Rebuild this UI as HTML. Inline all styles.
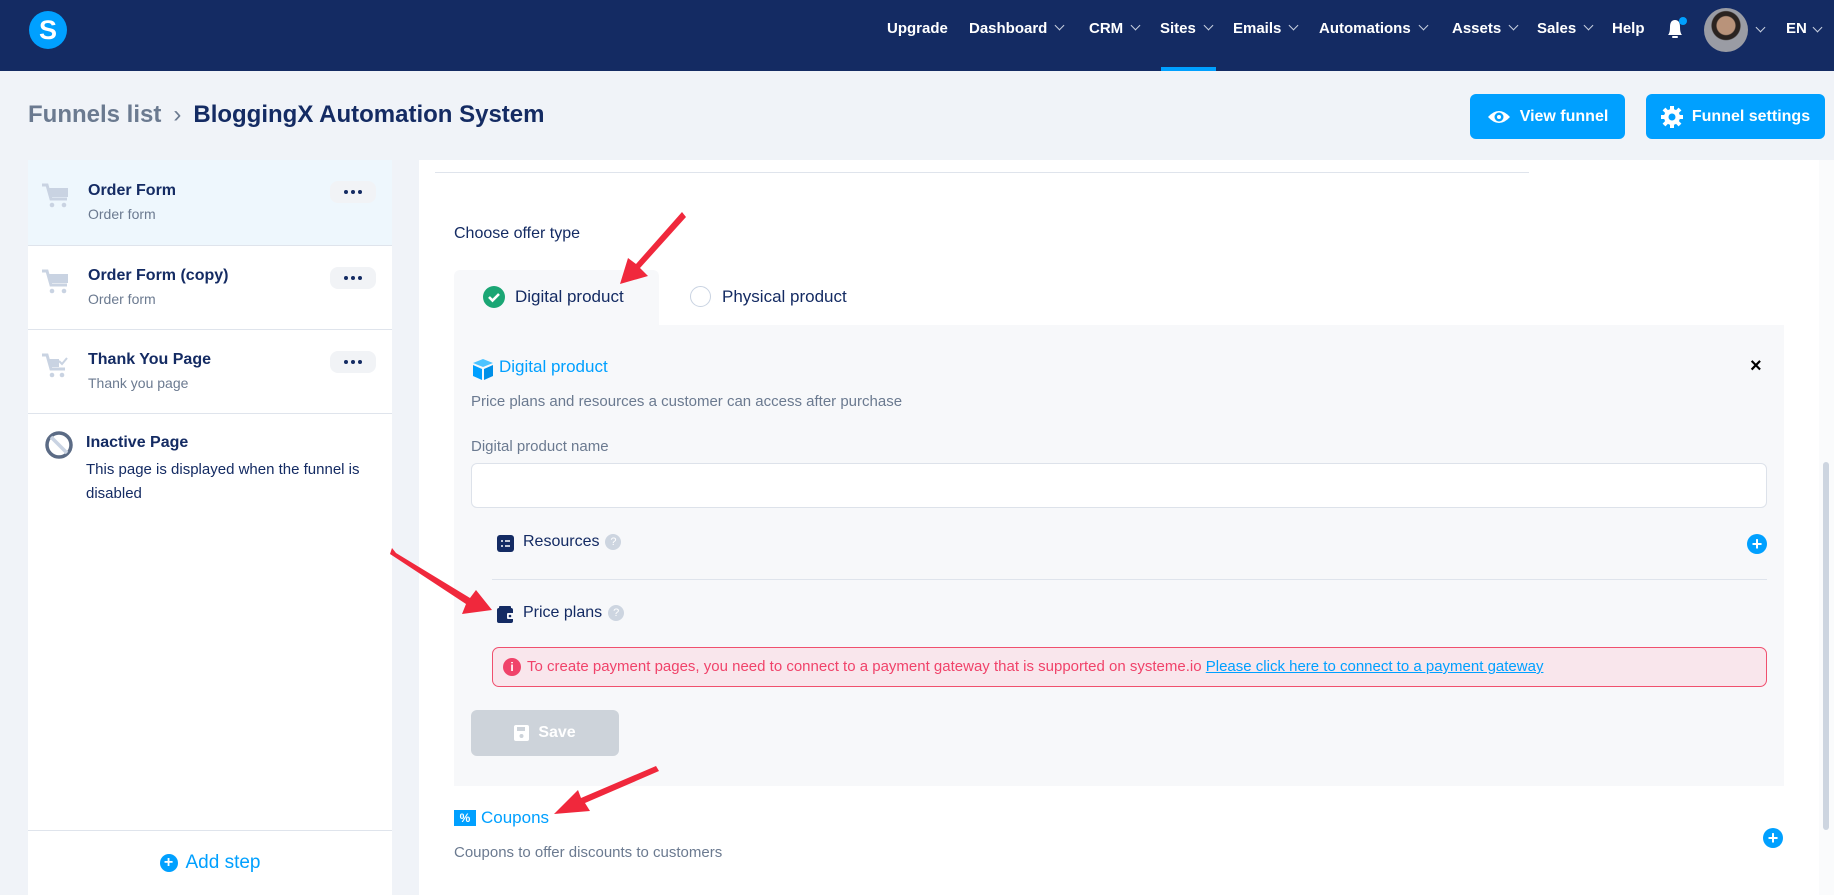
<!DOCTYPE html>
<html><head><meta charset="utf-8">
<style>
*{box-sizing:border-box;margin:0;padding:0}
body{width:1834px;height:895px;overflow:hidden;background:#f0f3f8;font-family:"Liberation Sans",sans-serif;color:#142b63;position:relative}
.abs{position:absolute}
.nav{position:absolute;left:0;top:0;width:1834px;height:71px;background:#142b63}
.ni{position:absolute;top:20px;color:#fff;font-weight:bold;font-size:15px;white-space:nowrap}
.chev{display:inline-block;width:7px;height:7px;border-right:1.5px solid #c8d0e0;border-bottom:1.5px solid #c8d0e0;transform:rotate(45deg);margin-left:9px;position:relative;top:-4px}
.btn{position:absolute;top:94px;height:45px;background:#00a0ff;border-radius:6px;color:#fff;font-weight:bold;font-size:16px;display:flex;align-items:center;justify-content:center;gap:9px}
.side{position:absolute;left:28px;top:160px;width:364px;height:735px;background:#fff}
.item{position:absolute;left:0;width:364px;border-bottom:1px solid #dfe4ec}
.it{position:absolute;left:60px;font-weight:bold;font-size:16px;color:#142b63}
.is{position:absolute;left:60px;font-size:14px;color:#6b7a90}
.dots{position:absolute;left:302px;width:46px;height:22px;background:#f1f3f6;border-radius:8px;display:flex;align-items:center;justify-content:center;gap:3px}
.dots i{width:4px;height:4px;border-radius:50%;background:#142b63}
.main{position:absolute;left:419px;top:160px;width:1400px;height:735px;background:#fff}
.t16{font-size:16px}
.gray{color:#6b7a90}
.blue{color:#00a0ff}
.plus{position:absolute;width:20px;height:20px;border-radius:50%;background:#00a0ff;color:#fff;font-weight:bold;font-size:18px;line-height:20px;text-align:center}
.q{display:inline-block;width:16px;height:16px;border-radius:50%;background:#cdd5e0;color:#fff;font-size:11px;line-height:16px;text-align:center;vertical-align:middle;margin-left:6px}
</style></head><body>
<div class="nav">
 <div class="abs" style="left:29px;top:11px;width:38px;height:38px;border-radius:50%;background:#00a0ff;color:#fff;font-weight:bold;font-size:27px;text-align:center;line-height:38px">S</div>
 <div class="ni" style="left:887px">Upgrade</div>
 <div class="ni" style="left:969px">Dashboard<span class="chev"></span></div>
 <div class="ni" style="left:1089px">CRM<span class="chev"></span></div>
 <div class="ni" style="left:1160px">Sites<span class="chev"></span></div>
 <div class="ni" style="left:1233px">Emails<span class="chev"></span></div>
 <div class="ni" style="left:1319px">Automations<span class="chev"></span></div>
 <div class="ni" style="left:1452px">Assets<span class="chev"></span></div>
 <div class="ni" style="left:1537px">Sales<span class="chev"></span></div>
 <div class="ni" style="left:1612px">Help</div>
 <svg class="abs" style="left:1665px;top:16px" width="22" height="26" viewBox="0 0 22 26"><path d="M3 19 Q5 17 5 11 Q5 4 10 4 Q15 4 15 11 Q15 17 17 19 Z" fill="#fff"/><rect x="7" y="20" width="6" height="2" rx="1" fill="#fff"/><circle cx="18" cy="5" r="4" fill="#00a0ff"/></svg>
 <div class="abs" style="left:1704px;top:8px;width:44px;height:44px;border-radius:50%;background:radial-gradient(circle at 50% 40%,#b9937a 0 9px,#2a2320 10px 14px,#9a9ca4 15px)"></div>
 <span class="chev" style="position:absolute;left:1757px;top:24px;margin:0"></span>
 <div class="ni" style="left:1786px">EN</div>
 <span class="chev" style="position:absolute;left:1814px;top:24px;margin:0"></span>
 <div class="abs" style="left:1161px;top:67px;width:55px;height:4px;background:#00a0ff"></div>
</div>

<div class="abs" style="left:28px;top:101px;font-size:24px;font-weight:bold;white-space:nowrap"><span style="color:#6b7a90">Funnels list</span><span style="color:#6b7a90;font-weight:normal;margin:0 12px 0 12px">›</span><span style="color:#142b63">BloggingX Automation System</span></div>
<div class="btn" style="left:1470px;width:155px"><svg width="24" height="18" viewBox="0 0 24 18"><path d="M1 9 Q12 -3 23 9 Q12 21 1 9Z" fill="#fff"/><circle cx="12" cy="9" r="4.5" fill="#00a0ff"/><circle cx="12" cy="9" r="2" fill="#fff"/></svg>View funnel</div>
<div class="btn" style="left:1646px;width:179px"><svg width="22" height="22" viewBox="0 0 22 22"><circle cx="11" cy="11" r="8" fill="#fff"/><g stroke="#fff" stroke-width="4"><path d="M11 0v22M0 11h22M3 3l16 16M19 3L3 19"/></g><circle cx="11" cy="11" r="3.5" fill="#00a0ff"/></svg>Funnel settings</div>

<div class="side">
 <div class="item" style="top:0;height:86px;background:#eef7fd">
  <svg class="abs" style="left:14px;top:22px" width="28" height="28" viewBox="0 0 28 28"><path d="M0 3h5l4 14h16" stroke="#c9d3e2" stroke-width="3" fill="none"/><rect x="7" y="6" width="19" height="9" fill="#c9d3e2"/><circle cx="10" cy="23" r="2.3" fill="#c9d3e2"/><circle cx="22" cy="23" r="2.3" fill="#c9d3e2"/></svg>
  <div class="it" style="top:22px">Order Form</div><div class="is" style="top:46px">Order form</div>
  <div class="dots" style="top:21px"><i></i><i></i><i></i></div></div>
 <div class="item" style="top:86px;height:84px">
  <svg class="abs" style="left:14px;top:22px" width="28" height="28" viewBox="0 0 28 28"><path d="M0 3h5l4 14h16" stroke="#c9d3e2" stroke-width="3" fill="none"/><rect x="7" y="6" width="19" height="9" fill="#c9d3e2"/><circle cx="10" cy="23" r="2.3" fill="#c9d3e2"/><circle cx="22" cy="23" r="2.3" fill="#c9d3e2"/></svg>
  <div class="it" style="top:21px">Order Form (copy)</div><div class="is" style="top:45px">Order form</div>
  <div class="dots" style="top:21px"><i></i><i></i><i></i></div></div>
 <div class="item" style="top:170px;height:84px">
  <svg class="abs" style="left:14px;top:22px" width="28" height="28" viewBox="0 0 28 28"><path d="M0 3h5l4 14h14" stroke="#c9d3e2" stroke-width="3" fill="none"/><path d="M7 7h10v8H9z" fill="#c9d3e2"/><path d="M17 9l3 3 5-6" stroke="#c9d3e2" stroke-width="2" fill="none"/><circle cx="10" cy="23" r="2.3" fill="#c9d3e2"/><circle cx="20" cy="23" r="2.3" fill="#c9d3e2"/></svg>
  <div class="it" style="top:21px">Thank You Page</div><div class="is" style="top:45px">Thank you page</div>
  <div class="dots" style="top:21px"><i></i><i></i><i></i></div></div>
 <svg class="abs" style="left:16px;top:270px" width="30" height="30" viewBox="0 0 30 30"><circle cx="15" cy="15" r="12" stroke="#5b6b85" stroke-width="3.5" fill="none"/><path d="M7 7l16 16" stroke="#c9d3e2" stroke-width="3.5"/></svg>
 <div class="it" style="left:58px;top:274px">Inactive Page</div>
 <div class="abs" style="left:58px;top:298px;font-size:15px;line-height:24px;width:300px;color:#142b63">This page is displayed when the funnel is disabled</div>
 <div class="abs" style="left:0;top:670px;width:364px;height:65px;border-top:1px solid #dfe4ec;display:flex;align-items:center;justify-content:center;gap:8px;color:#00a0ff;font-size:19px"><span style="width:18px;height:18px;border-radius:50%;background:#00a0ff;color:#fff;font-weight:bold;font-size:16px;line-height:18px;text-align:center">+</span>Add step</div>
</div>

<div class="main">
 <div class="abs" style="left:16px;top:12px;width:1094px;height:1px;background:#dfe4ec"></div>
 <div class="abs t16" style="left:35px;top:65px">Choose offer type</div>
 <div class="abs" style="left:35px;top:110px;width:205px;height:56px;background:#f7f8fa;border-radius:6px 6px 0 0"></div>
 <div class="abs" style="left:35px;top:165px;width:1330px;height:461px;background:#f7f8fa"></div>
 <svg class="abs" style="left:64px;top:126px" width="22" height="22" viewBox="0 0 22 22"><circle cx="11" cy="11" r="11" fill="#1aa674"/><path d="M6 11l3.5 3.5L16 8" stroke="#fff" stroke-width="2.6" fill="none"/></svg>
 <div class="abs" style="left:96px;top:127px;font-size:17px">Digital product</div>
 <div class="abs" style="left:271px;top:126px;width:21px;height:21px;border-radius:50%;border:1.5px solid #c9d3e2;background:#fff"></div>
 <div class="abs" style="left:303px;top:127px;font-size:17px">Physical product</div>

 <svg class="abs" style="left:52px;top:197px" width="24" height="24" viewBox="0 0 24 24"><path d="M2 6l10-4 10 4-10 4z" fill="#4cc3ff"/><path d="M2 8l9 4v11l-9-4z" fill="#00a0ff"/><path d="M22 8l-9 4v11l9-4z" fill="#0090e8"/></svg>
 <div class="abs blue" style="left:80px;top:197px;font-size:17px">Digital product</div>
 <div class="abs" style="left:1331px;top:195px;font-size:20px;font-weight:bold;color:#000">×</div>
 <div class="abs gray" style="left:52px;top:233px;font-size:15px">Price plans and resources a customer can access after purchase</div>
 <div class="abs gray" style="left:52px;top:278px;font-size:15px">Digital product name</div>
 <div class="abs" style="left:52px;top:303px;width:1296px;height:45px;background:#fff;border:1px solid #dde2ea;border-radius:6px"></div>
 <svg class="abs" style="left:78px;top:375px" width="17" height="17" viewBox="0 0 17 17"><rect width="17" height="17" rx="3" fill="#142b63"/><path d="M4 6h2M8 6h5M4 11h2M8 11h5" stroke="#fff" stroke-width="1.6"/></svg>
 <div class="abs" style="left:104px;top:373px;font-size:16px">Resources<span class="q">?</span></div>
 <div class="plus" style="left:1328px;top:374px">+</div>
 <div class="abs" style="left:73px;top:419px;width:1275px;height:1px;background:#dfe4ec"></div>
 <svg class="abs" style="left:78px;top:446px" width="18" height="17" viewBox="0 0 18 17"><rect y="2" width="16" height="15" rx="2" fill="#142b63"/><rect x="2" y="0" width="12" height="3" rx="1" fill="#142b63"/><rect x="10" y="7" width="8" height="6" rx="1" fill="#f7f8fa"/><circle cx="13" cy="10" r="1.3" fill="#142b63"/></svg>
 <div class="abs" style="left:104px;top:444px;font-size:16px">Price plans<span class="q">?</span></div>
 <div class="abs" style="left:73px;top:487px;width:1275px;height:40px;background:#f9e6ec;border:1px solid #f0506e;border-radius:7px"></div>
 <div class="abs" style="left:84px;top:498px;width:18px;height:18px;border-radius:50%;background:#f0436a;color:#fff;font-weight:bold;font-size:12px;text-align:center;line-height:18px">i</div>
 <div class="abs" style="left:108px;top:498px;font-size:15px;color:#f0436a;white-space:nowrap">To create payment pages, you need to connect to a payment gateway that is supported on systeme.io <span style="color:#00a0ff;text-decoration:underline">Please click here to connect to a payment gateway</span></div>
 <div class="abs" style="left:52px;top:550px;width:148px;height:46px;background:#cdd3da;border-radius:6px;color:#fff;font-weight:bold;font-size:16px;display:flex;align-items:center;justify-content:center;gap:9px"><svg width="15" height="16" viewBox="0 0 15 16"><rect width="15" height="16" rx="2" fill="#fff"/><rect x="3" y="2" width="8" height="4" fill="#cdd3da"/><circle cx="7.5" cy="11" r="2" fill="#cdd3da"/></svg>Save</div>

 <div class="abs" style="left:35px;top:650px;width:22px;height:16px;background:#00a0ff;color:#fff;font-size:12px;font-weight:bold;text-align:center;line-height:16px">%</div>
 <div class="abs blue" style="left:62px;top:648px;font-size:17px">Coupons</div>
 <div class="abs gray" style="left:35px;top:684px;font-size:15px">Coupons to offer discounts to customers</div>
 <div class="plus" style="left:1344px;top:668px">+</div>
</div>
<div class="abs" style="left:1819px;top:160px;width:15px;height:735px;background:#fafbfc"></div>
<div class="abs" style="left:1823px;top:462px;width:6px;height:368px;background:#cdd5e0;border-radius:3px"></div>

<svg class="abs" style="left:0;top:0" width="1834" height="895">
 <g fill="#f0283c">
  <path d="M682 212 L686 217 L640 268 L648 276 L620 284 L628 258 L636 264 Z"/>
  <path d="M392 548 L396 553 L470 598 L476 590 L492 610 L462 614 L466 604 L390 554 Z"/>
  <path d="M656 766 L659 771 L585 803 L590 811 L554 814 L578 790 L581 798 Z"/>
 </g>
</svg>
</body></html>
